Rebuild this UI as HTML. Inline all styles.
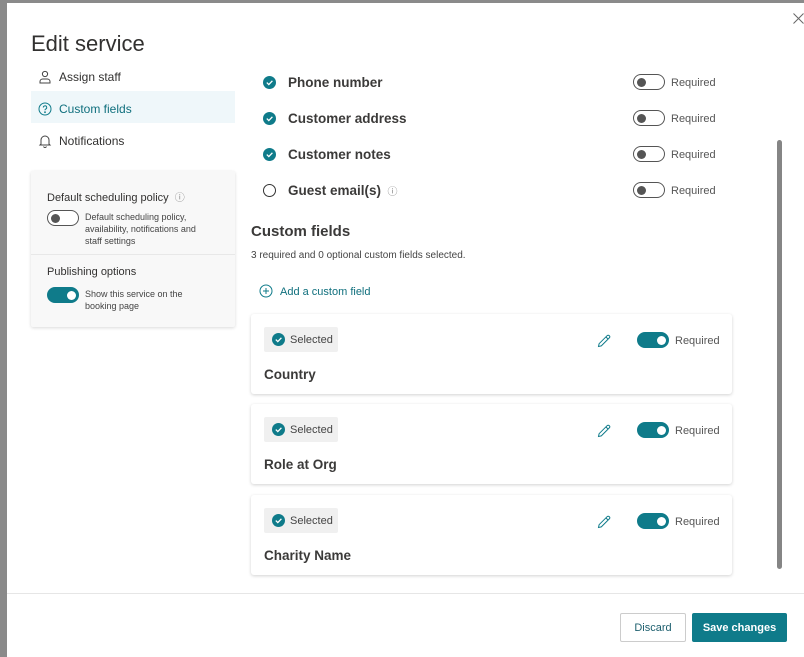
<!DOCTYPE html>
<html><head><style>
*{box-sizing:border-box;margin:0;padding:0}
body{width:804px;height:657px;background:#8a8a8a;font-family:"Liberation Sans",sans-serif;color:#323130;position:relative;overflow:hidden}
.dlg{position:absolute;left:7px;top:3px;width:797px;height:654px;background:#fff}
.abs{position:absolute}
h1{position:absolute;left:24px;top:28px;font-size:22px;font-weight:normal;color:#323130}
.nav{font-size:12px;color:#323130}
.card{background:#f8f8f8;box-shadow:0 1px 3px rgba(0,0,0,.15);border-radius:2px}
.tog{position:absolute;width:32px;height:16px;border-radius:8px;border:1px solid #555;background:#fff}
.tog::after{content:"";position:absolute;left:3px;top:3px;width:9px;height:9px;border-radius:50%;background:#555}
.tog.on{background:#0f7b8a;border-color:#0f7b8a}
.tog.on::after{left:19px;background:#fff}
.chk{position:absolute;width:13px;height:13px;border-radius:50%;background:#0f7b8a}
.chk svg{position:absolute;left:0;top:0}
.fld{font-size:13.5px;font-weight:bold;color:#3b3a39}
.req{font-size:11px;color:#555}
.cf{position:absolute;left:244px;width:481px;height:80px;background:#fff;box-shadow:0 1px 3px rgba(0,0,0,.18);border-radius:3px}
.sel{position:absolute;left:13px;top:13px;width:74px;height:25px;background:#f0f0f0;border-radius:2px;font-size:11px;color:#444}
</style></head><body>
<div class="dlg">
<svg class="abs" style="left:786px;top:10px" width="11" height="11" viewBox="0 0 11 11" stroke="#666" stroke-width="1"><path d="M.5.5l10 10M10.5.5l-10 10"/></svg>
<h1>Edit service</h1>
<svg class="abs" style="left:31px;top:67px" width="14" height="14" viewBox="0 0 14 14" fill="none" stroke="#444" stroke-width="1"><circle cx="7" cy="4" r="2.6"/><path d="M2 13v-1.5c0-1.5 1.2-2.5 2.7-2.5h4.6c1.5 0 2.7 1 2.7 2.5V13z"/></svg>
<div class="abs nav" style="left:52px;top:67px">Assign staff</div>
<div class="abs" style="left:24px;top:88px;width:204px;height:32px;background:#eff7fa"></div>
<svg class="abs" style="left:31px;top:99px" width="14" height="14" viewBox="0 0 14 14" fill="none" stroke="#0f7b8a" stroke-width="1"><circle cx="7" cy="7" r="6"/><path d="M5.3 5.5a1.7 1.7 0 1 1 2.3 1.6c-.5.2-.6.6-.6 1.1"/><circle cx="7" cy="10.2" r=".4" fill="#0f7b8a"/></svg>
<div class="abs nav" style="left:52px;top:99px;color:#0f6f7d">Custom fields</div>
<svg class="abs" style="left:31px;top:131px" width="14" height="14" viewBox="0 0 14 14" fill="none" stroke="#444" stroke-width="1"><path d="M3 10V6a4 4 0 0 1 8 0v4l1 1H2zM5.5 12.5a1.6 1.6 0 0 0 3 0"/></svg>
<div class="abs nav" style="left:52px;top:131px">Notifications</div>

<div class="abs card" style="left:24px;top:168px;width:204px;height:156px"></div>
<div class="abs" style="left:24px;top:251px;width:204px;height:1px;background:#e8e8e8"></div>
<div class="abs" style="left:40px;top:186px;font-size:11px;color:#323130">Default scheduling policy &nbsp;<span style="color:#888;font-size:10px">ⓘ</span></div>
<div class="tog" style="left:40px;top:207px"></div>
<div class="abs" style="left:78px;top:208px;font-size:9px;line-height:12px;color:#444;width:130px">Default scheduling policy, availability, notifications and staff settings</div>
<div class="abs" style="left:40px;top:263px;font-size:11px;color:#323130">Publishing options</div>
<div class="tog on" style="left:40px;top:284px"></div>
<div class="abs" style="left:78px;top:285px;font-size:9px;line-height:12px;color:#444;width:120px">Show this service on the booking page</div>

<div class="chk" style="left:256px;top:73px"><svg width="13" height="13"><path d="M3.8 6.6l2 2 3.6-3.8" stroke="#fff" stroke-width="1.3" fill="none"/></svg></div>
<div class="abs fld" style="left:281px;top:72px">Phone number</div>
<div class="chk" style="left:256px;top:109px"><svg width="13" height="13"><path d="M3.8 6.6l2 2 3.6-3.8" stroke="#fff" stroke-width="1.3" fill="none"/></svg></div>
<div class="abs fld" style="left:281px;top:108px">Customer address</div>
<div class="chk" style="left:256px;top:145px"><svg width="13" height="13"><path d="M3.8 6.6l2 2 3.6-3.8" stroke="#fff" stroke-width="1.3" fill="none"/></svg></div>
<div class="abs fld" style="left:281px;top:144px">Customer notes</div>
<div class="abs" style="left:256px;top:181px;width:13px;height:13px;border-radius:50%;border:1px solid #333"></div>
<div class="abs fld" style="left:281px;top:180px">Guest email(s) <span style="font-weight:normal;color:#888;font-size:10px">&nbsp;ⓘ</span></div>
<div class="tog" style="left:626px;top:71px"></div><div class="abs req" style="left:664px;top:74px">Required</div>
<div class="tog" style="left:626px;top:107px"></div><div class="abs req" style="left:664px;top:110px">Required</div>
<div class="tog" style="left:626px;top:143px"></div><div class="abs req" style="left:664px;top:146px">Required</div>
<div class="tog" style="left:626px;top:179px"></div><div class="abs req" style="left:664px;top:182px">Required</div>

<div class="abs" style="left:244px;top:220px;font-size:15px;font-weight:bold;color:#3b3a39">Custom fields</div>
<div class="abs" style="left:244px;top:247px;font-size:10px;color:#444">3 required and 0 optional custom fields selected.</div>
<svg class="abs" style="left:252px;top:281px" width="14" height="14" viewBox="0 0 14 14" fill="none" stroke="#0f7b8a" stroke-width="1"><circle cx="7" cy="7" r="6"/><path d="M7 4v6M4 7h6"/></svg>
<div class="abs" style="left:273px;top:283px;font-size:11px;color:#0f6f7d">Add a custom field</div>

<div class="cf" style="top:311px">
<div class="sel"><div class="chk" style="left:8px;top:6px"><svg width="13" height="13"><path d="M3.8 6.6l2 2 3.6-3.8" stroke="#fff" stroke-width="1.3" fill="none"/></svg></div><span class="abs" style="left:26px;top:7px">Selected</span></div>
<svg class="abs" style="left:346px;top:20px" width="14" height="14" viewBox="0 0 14 14" fill="none" stroke="#0f7b8a" stroke-width="1"><path d="M1.5 12.5l.6-2.8 8-8a1.4 1.4 0 0 1 2.2 2.2l-8 8z M9 3l2 2"/></svg>
<div class="tog on" style="left:386px;top:18px"></div><div class="abs req" style="left:424px;top:21px">Required</div>
<div class="abs fld" style="left:13px;top:53px">Country</div></div>
<div class="cf" style="top:401px">
<div class="sel"><div class="chk" style="left:8px;top:6px"><svg width="13" height="13"><path d="M3.8 6.6l2 2 3.6-3.8" stroke="#fff" stroke-width="1.3" fill="none"/></svg></div><span class="abs" style="left:26px;top:7px">Selected</span></div>
<svg class="abs" style="left:346px;top:20px" width="14" height="14" viewBox="0 0 14 14" fill="none" stroke="#0f7b8a" stroke-width="1"><path d="M1.5 12.5l.6-2.8 8-8a1.4 1.4 0 0 1 2.2 2.2l-8 8z M9 3l2 2"/></svg>
<div class="tog on" style="left:386px;top:18px"></div><div class="abs req" style="left:424px;top:21px">Required</div>
<div class="abs fld" style="left:13px;top:53px">Role at Org</div></div>
<div class="cf" style="top:492px">
<div class="sel"><div class="chk" style="left:8px;top:6px"><svg width="13" height="13"><path d="M3.8 6.6l2 2 3.6-3.8" stroke="#fff" stroke-width="1.3" fill="none"/></svg></div><span class="abs" style="left:26px;top:7px">Selected</span></div>
<svg class="abs" style="left:346px;top:20px" width="14" height="14" viewBox="0 0 14 14" fill="none" stroke="#0f7b8a" stroke-width="1"><path d="M1.5 12.5l.6-2.8 8-8a1.4 1.4 0 0 1 2.2 2.2l-8 8z M9 3l2 2"/></svg>
<div class="tog on" style="left:386px;top:18px"></div><div class="abs req" style="left:424px;top:21px">Required</div>
<div class="abs fld" style="left:13px;top:53px">Charity Name</div></div>

<div class="abs" style="left:770px;top:137px;width:5px;height:429px;background:#858585;border-radius:3px"></div>
<div class="abs" style="left:0;top:590px;width:797px;height:1px;background:#e6e6e6"></div>
<div class="abs" style="left:613px;top:610px;width:66px;height:29px;border:1px solid #ccc;border-radius:2px;font-size:11px;color:#1d5f6e;text-align:center;line-height:29px">Discard</div>
<div class="abs" style="left:685px;top:610px;width:95px;height:29px;background:#0f7b8a;border-radius:2px;font-size:11px;font-weight:bold;color:#fff;text-align:center;line-height:31px">Save changes</div>
</div>
</body></html>
